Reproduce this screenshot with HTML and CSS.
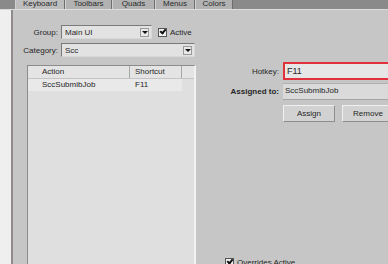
FILE: index.html
```html
<!DOCTYPE html>
<html lang="en">
<head>
    <meta charset="UTF-8">
    <title>Customize User Interface</title>
    <link rel="stylesheet" href="styles.css">
</head>
<body>
    <div class="window">
        <div class="tabs">
            <span class="tab-lead"></span>
            <span class="tab tab-keyboard">Keyboard</span>
            <span class="tab tab-toolbars">Toolbars</span>
            <span class="tab tab-quads">Quads</span>
            <span class="tab tab-menus">Menus</span>
            <span class="tab tab-colors">Colors</span>
        </div>

        <div class="content">
            <div class="gutter"></div>

            <div class="left">
                <div class="row">
                    <span class="lbl">Group:</span>
                    <div class="combo combo-group">
                        <span>Main UI</span>
                        <span class="drop"></span>
                    </div>
                    <span class="check checked"></span>
                    <span class="check-text">Active</span>
                </div>
                <div class="row row-category">
                    <span class="lbl">Category:</span>
                    <div class="combo combo-category">
                        <span>Scc</span>
                        <span class="drop"></span>
                    </div>
                </div>

                <div class="list">
                    <div class="list-head">
                        <span class="col-action">Action</span>
                        <span class="col-shortcut">Shortcut</span>
                        <span class="col-rest"></span>
                    </div>
                    <div class="list-row">
                        <span class="col-action">SccSubmibJob</span>
                        <span class="col-shortcut">F11</span>
                    </div>
                </div>
            </div>

            <div class="right">
                <div class="prow">
                    <span class="plbl">Hotkey:</span>
                    <div class="hotkey">F11</div>
                </div>
                <div class="prow prow-assigned">
                    <span class="plbl bold">Assigned to:</span>
                    <div class="assigned">SccSubmibJob</div>
                </div>
                <div class="buttons">
                    <button type="button" class="btn">Assign</button>
                    <button type="button" class="btn">Remove</button>
                </div>
                <div class="thumb"></div>
                <div class="overrides">
                    <span class="check checked"></span>
                    <span class="check-text">Overrides Active</span>
                </div>
            </div>
        </div>
    </div>
</body>
</html>
```

FILE: styles.css
```css
html, body {
    margin: 0;
    width: 388px;
    height: 264px;
    overflow: hidden;
}

body {
    font-family: 'Liberation Sans', Arial, sans-serif;
    font-size: 8px;
    color: #262626;
    background-color: #c6c6c6;
}

.window {
    display: flex;
    flex-direction: column;
    height: 264px;
}

/* tab strip, top edge is cut off by the screenshot */
.tabs {
    display: flex;
    height: 9px;
    background-color: #8a8a8a;
    overflow: hidden;
    flex-shrink: 0;
}

.tab-lead {
    width: 15px;
}

.tab {
    box-sizing: border-box;
    height: 9px;
    line-height: 8px;
    text-align: center;
    background-color: #b2b2b2;
    color: #2a2a2a;
    border-right: 1px solid #6e6e6e;
    border-left: 1px solid #cfcfcf;
}

.tab-keyboard { width: 50px; background-color: #bdbdbd; }
.tab-toolbars { width: 47px; }
.tab-quads { width: 43px; }
.tab-menus { width: 40px; }
.tab-colors { width: 38px; }

.content {
    display: flex;
    flex: 1;
    border-top: 1px solid #dcdcdc;
}

.gutter {
    width: 11px;
    background-color: #efefef;
    border-right: 2px solid #8f8a8c;
    flex-shrink: 0;
}

.left {
    width: 184px;
    padding-top: 15px;
    flex-shrink: 0;
}

.row {
    display: flex;
    align-items: center;
    height: 14px;
}

.row-category {
    margin-top: 4px;
}

.lbl {
    width: 45px;
    margin-right: 3px;
    text-align: right;
}

.combo {
    box-sizing: border-box;
    display: flex;
    align-items: center;
    justify-content: space-between;
    height: 14px;
    padding: 0 2px 0 3px;
    background-color: #e2e2e2;
    border: 1px solid #7a7a7a;
    border-right-color: #d8d8d8;
    border-bottom-color: #d8d8d8;
}

.combo-group { width: 91px; }
.combo-category { width: 134px; }

.drop {
    box-sizing: border-box;
    width: 9px;
    height: 9px;
    background-color: #e8e8e8;
    border: 1px solid #9a9a9a;
    position: relative;
}

.drop::after {
    content: "";
    position: absolute;
    left: 1px;
    top: 2px;
    border-left: 3px solid transparent;
    border-right: 3px solid transparent;
    border-top: 3px solid #111;
}

.check {
    box-sizing: border-box;
    display: inline-block;
    width: 9px;
    height: 9px;
    background-color: #f0f0f0;
    border: 1px solid #555;
    position: relative;
}

.checked::after {
    content: "";
    position: absolute;
    left: 1px;
    top: 0;
    width: 4px;
    height: 2px;
    border-left: 2px solid #111;
    border-bottom: 2px solid #111;
    transform: rotate(-50deg);
}

.row .check {
    margin-left: 6px;
}

.check-text {
    margin-left: 3px;
}

.list {
    box-sizing: border-box;
    width: 169px;
    height: 200px;
    margin: 8px 0 0 14px;
    background-color: #dfdfdf;
    border: 1px solid #8c8c8c;
    border-right: 2px solid #f2f2f2;
    border-bottom: none;
}

.list-head {
    display: flex;
    height: 12px;
    line-height: 11px;
    background-color: #e4e4e4;
    border-bottom: 1px solid #c4c4c4;
}

.list-head span {
    box-sizing: border-box;
    border-right: 1px solid #a8a8a8;
}

.col-action {
    box-sizing: border-box;
    width: 102px;
    padding-left: 14px;
}

.col-shortcut {
    box-sizing: border-box;
    width: 52px;
    padding-left: 5px;
}

.col-rest {
    flex: 1;
}

.list-head .col-rest {
    border-right: none;
}

.list-row {
    display: flex;
    width: 154px;
    height: 12px;
    line-height: 12px;
    background-color: #e9e9e9;
}

.right {
    display: flex;
    flex-direction: column;
    flex: 1;
    padding-top: 52px;
}

.prow {
    display: flex;
    align-items: center;
}

.plbl {
    width: 82px;
    margin-right: 4px;
    text-align: right;
}

.bold {
    font-weight: bold;
}

.hotkey {
    box-sizing: border-box;
    width: 115px;
    height: 18px;
    line-height: 14px;
    padding-left: 2px;
    font-size: 9px;
    background-color: #e6e6e6;
    border: 2px solid #e0323c;
}

.prow-assigned {
    margin-top: 3px;
}

.assigned {
    box-sizing: border-box;
    width: 115px;
    height: 17px;
    line-height: 14px;
    padding-left: 2px;
    background-color: #dadada;
    border-top: 1px solid #b0b0b0;
    border-bottom: 1px solid #a4a4a4;
}

.buttons {
    display: flex;
    gap: 7px;
    margin: 5px 0 0 86px;
}

.btn {
    box-sizing: border-box;
    width: 52px;
    height: 17px;
    padding: 0;
    font-family: inherit;
    font-size: 8px;
    color: #262626;
    background-color: #d2d2d2;
    border: 1px solid #8e8e8e;
    border-top-color: #f0f0f0;
    border-left-color: #f0f0f0;
    flex-shrink: 0;
}

.thumb {
    align-self: flex-end;
    width: 9px;
    height: 56px;
    margin-top: 25px;
    background-color: #a3a3a3;
}

.overrides {
    display: flex;
    align-items: center;
    margin: 55px 0 0 28px;
}
```
